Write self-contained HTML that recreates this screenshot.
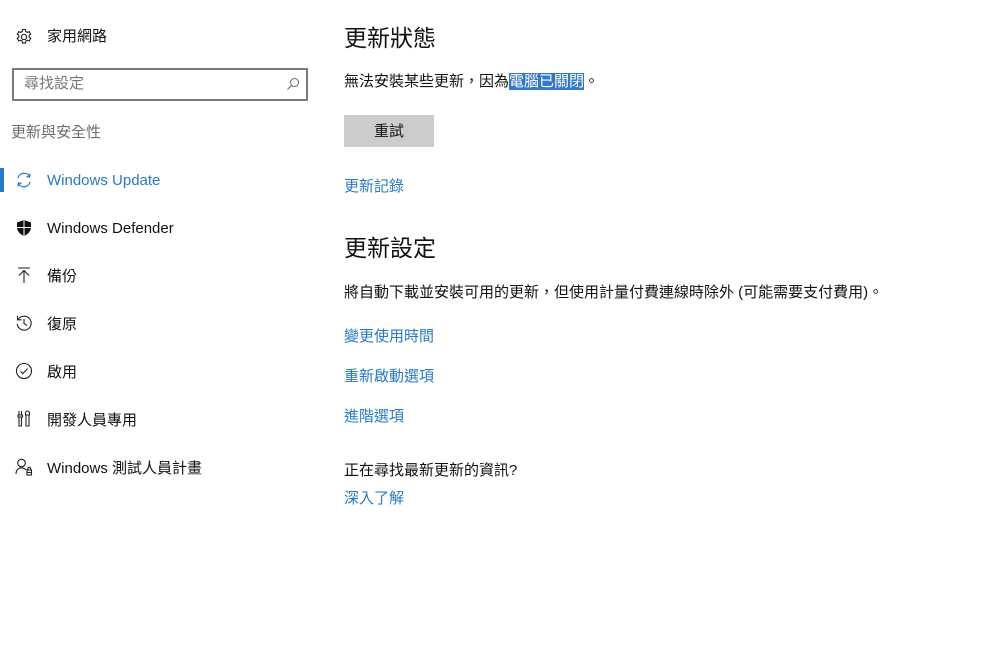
<!DOCTYPE html>
<html><head><meta charset="utf-8"><style>
body{margin:0;width:988px;height:669px;background:#fff;font-family:"Liberation Sans","Noto Sans CJK TC",sans-serif;color:#111;position:relative;overflow:hidden}
.a{position:absolute;white-space:nowrap;font-size:15px;line-height:20px}
.ic{position:absolute}
.blue{color:#2a79c4}
.gray{color:#666}
</style></head><body>
<svg class="ic" style="left:15px;top:28px" width="18" height="18" viewBox="0 0 18 18" fill="none" stroke="#222" stroke-width="1.1"><circle cx="9" cy="9" r="2.6"/><path d="M7.6 1.5h2.8l.4 2 1.6.9 1.9-.7 1.4 2.4-1.5 1.3v1.8l1.5 1.3-1.4 2.4-1.9-.7-1.6.9-.4 2H7.6l-.4-2-1.6-.9-1.9.7-1.4-2.4 1.5-1.3V7.4L2.3 6.1l1.4-2.4 1.9.7 1.6-.9z"/></svg>
<div class="a" style="left:47px;top:27px">家用網路</div>
<div style="position:absolute;left:12px;top:68px;width:292px;height:29px;border:2px solid #7a7a7a"></div>
<div class="a gray" style="left:24px;top:74px;color:#777">尋找設定</div>
<svg class="ic" style="left:286px;top:77px" width="14" height="14" viewBox="0 0 14 14" fill="none" stroke="#666" stroke-width="1"><circle cx="8.5" cy="5.5" r="4"/><path d="M5.6 8.4L1.5 12.5"/></svg>
<div class="a gray" style="left:11px;top:123px;color:#6d6d6d">更新與安全性</div>
<div style="position:absolute;left:0;top:168px;width:4px;height:24px;background:#2a79c4"></div>
<svg class="ic" style="left:15px;top:171px" width="18" height="18" viewBox="0 0 18 18" fill="none" stroke="#2a79c4" stroke-width="1.3"><path d="M3 7A6.2 6.2 0 0 1 14.5 5.5M15 11A6.2 6.2 0 0 1 3.5 12.5"/><path d="M14.8 2.5v3.3h-3.3M3.2 15.5v-3.3h3.3"/></svg>
<div class="a blue" style="left:47px;top:171px">Windows Update</div>
<svg class="ic" style="left:16px;top:219px" width="16" height="18" viewBox="0 0 16 18"><path d="M8 1L15 3.5V8C15 12.5 11.5 15.5 8 17 4.5 15.5 1 12.5 1 8V3.5z" fill="#111"/><path d="M8 1V17M1 8.5H15" stroke="#fff" stroke-width="1"/></svg>
<div class="a" style="left:47px;top:219px">Windows Defender</div>
<svg class="ic" style="left:15px;top:266px" width="18" height="18" viewBox="0 0 18 18" fill="none" stroke="#222" stroke-width="1.1"><path d="M3 2h12M9 17V4.5M4 9.5l5-5 5 5"/></svg>
<div class="a" style="left:47px;top:267px">備份</div>
<svg class="ic" style="left:15px;top:314px" width="18" height="18" viewBox="0 0 18 18" fill="none" stroke="#222" stroke-width="1.1"><path d="M3.2 5.5A7 7 0 1 1 2.2 10"/><path d="M2.5 1.8v4h4M9 5v4.5l3 2"/></svg>
<div class="a" style="left:47px;top:315px">復原</div>
<svg class="ic" style="left:15px;top:362px" width="18" height="18" viewBox="0 0 18 18" fill="none" stroke="#222" stroke-width="1.1"><circle cx="9" cy="9" r="7.5"/><path d="M5.5 9.3l2.3 2.3 4.8-5"/></svg>
<div class="a" style="left:47px;top:363px">啟用</div>
<svg class="ic" style="left:15px;top:410px" width="18" height="18" viewBox="0 0 18 18" fill="none" stroke="#222" stroke-width="1.1"><path d="M4 1v4M6.5 1v4M3 5h4.5v2H3zM4 7v9h2.5V7M12.5 1a2 2 0 0 0-2 2v2h4V3a2 2 0 0 0-2-2M11 5v11h3V5"/></svg>
<div class="a" style="left:47px;top:411px">開發人員專用</div>
<svg class="ic" style="left:15px;top:458px" width="18" height="18" viewBox="0 0 18 18" fill="none" stroke="#222" stroke-width="1.1"><circle cx="6.5" cy="5" r="3.8"/><path d="M1 16c0-4 2.5-6.2 5.5-6.2S10 11 11 12"/><rect x="12" y="12" width="4.5" height="5"/><path d="M12.8 12v-1.2a1.4 1.4 0 0 1 2.9 0V12M12 14.5h4.5"/></svg>
<div class="a" style="left:47px;top:459px">Windows 測試人員計畫</div>

<div class="a" style="left:344px;top:23px;font-size:23px;line-height:30px">更新狀態</div>
<div class="a" style="left:344px;top:72px">無法安裝某些更新，因為<span style="background:#3178c6;color:#fff">電腦已關閉</span>。</div>
<div style="position:absolute;left:344px;top:115px;width:90px;height:32px;background:#cccccc"></div>
<div class="a" style="left:374px;top:122px">重試</div>
<div class="a blue" style="left:344px;top:177px">更新記錄</div>
<div class="a" style="left:344px;top:233px;font-size:23px;line-height:30px">更新設定</div>
<div class="a" style="left:344px;top:283px">將自動下載並安裝可用的更新，但使用計量付費連線時除外 (可能需要支付費用)。</div>
<div class="a blue" style="left:344px;top:327px">變更使用時間</div>
<div class="a blue" style="left:344px;top:367px">重新啟動選項</div>
<div class="a blue" style="left:344px;top:407px">進階選項</div>
<div class="a" style="left:344px;top:461px">正在尋找最新更新的資訊?</div>
<div class="a blue" style="left:344px;top:489px">深入了解</div>
</body></html>
